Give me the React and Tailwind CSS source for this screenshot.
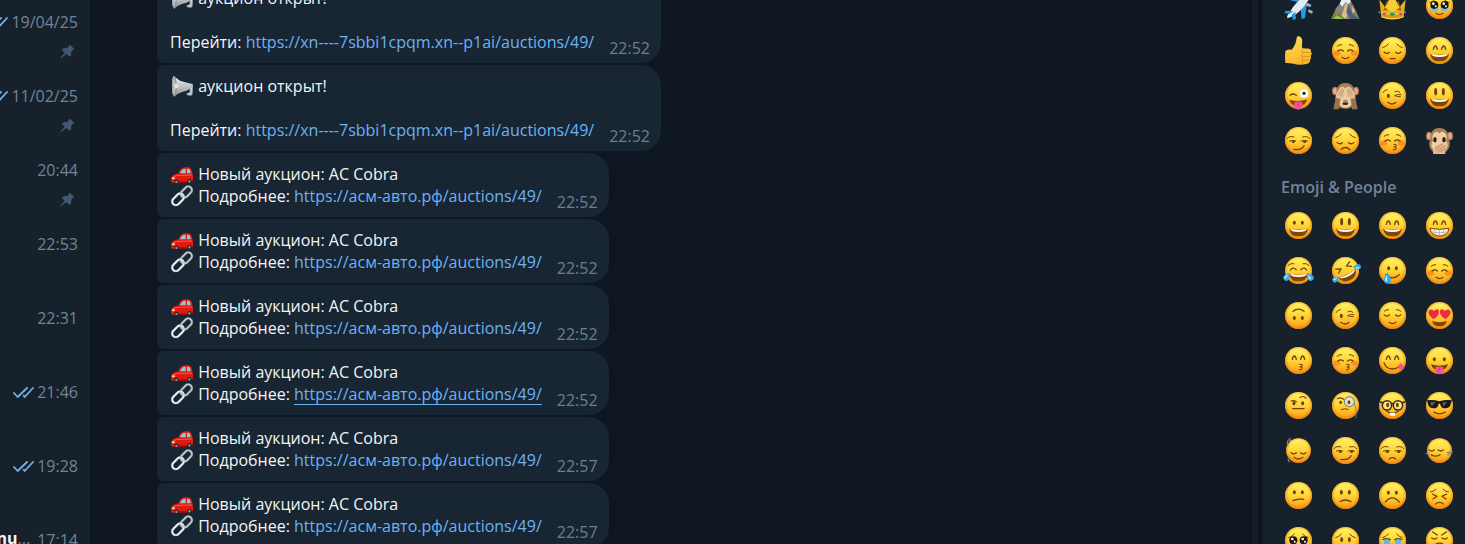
import React from "react";

const INK = "#6f4109";

/* ---------- face building blocks (81 x 81 canvas) ---------- */

const Stroke = ({ d, w = 3.8, c = INK }) => (
  <path d={d} fill="none" stroke={c} strokeWidth={w} strokeLinecap="round" strokeLinejoin="round" />
);

const OvalEyes = ({ y = 32, rx = 4.4, ry = 6, l = 28, r = 52 }) => (
  <g fill={INK}>
    <ellipse cx={l} cy={y} rx={rx} ry={ry} />
    <ellipse cx={r} cy={y} rx={rx} ry={ry} />
  </g>
);

const HappyEyes = () => <Stroke d="M22 37Q24 27 28 27Q32 27 34 37M47 37Q49 27 53 27Q57 27 59 37" w={4} />;
const ClosedUp = () => <Stroke d="M18 42Q26 35 34 42M47 42Q55 35 63 42" />;
const ClosedDown = ({ y = 0 }) => (
  <g transform={`translate(0 ${y})`}>
    <Stroke d="M15 38Q23 46 31 39M50 39Q58 46 66 38" />
  </g>
);
const SoftBrows = () => <Stroke d="M15 28Q20 22 29 23M52 23Q61 22 66 28" w={3} />;
const SadBrows = () => <Stroke d="M11 32Q21 30 28 21M53 21Q60 30 70 32" w={3} />;
const Blush = () => (
  <g fill="#ff5a1f" opacity="0.5">
    <ellipse cx="15" cy="48" rx="10" ry="8" />
    <ellipse cx="66" cy="48" rx="10" ry="8" />
  </g>
);
const Smile = ({ y = 0 }) => (
  <g transform={`translate(0 ${y})`}>
    <Stroke d="M30 61Q40 69 51 61" />
  </g>
);
const Frown = () => <Stroke d="M31 66Q40 58 50 66" />;
const Kiss = () => <Stroke d="M44 52Q54 52 51 57Q49 60 45 60Q53 60 51 65Q49 69 43 68" w={3.2} />;
const Grin = () => (
  <g>
    <path d="M12 50Q40 57 69 50Q65 73 40 73Q16 73 12 50Z" fill="#7c4706" />
    <path d="M15 51Q40 58 66 51Q64 60 40 60Q18 60 15 51Z" fill="#fff" />
  </g>
);
const SideEyes = () => (
  <g>
    <Stroke d="M6 35Q13 25 27 30M53 30Q67 25 74 35" w={3} />
    <Stroke d="M13 42Q22 38 32 42M48 42Q58 38 68 42" w={3} />
    <ellipse cx="25" cy="44" rx="5" ry="4" fill={INK} />
    <ellipse cx="59" cy="44" rx="5" ry="4" fill={INK} />
  </g>
);
const Wink = () => (
  <g>
    <Stroke d="M12 32Q15 24 25 23M48 29Q56 24 63 31" w={3} />
    <ellipse cx="28" cy="42" rx="4.4" ry="6.5" fill={INK} />
    <Stroke d="M66 38Q54 36 47 41Q56 45 64 44" w={3} />
    <Stroke d="M26 61Q39 71 51 61" />
  </g>
);
const Drop = ({ x, y, r = 0, s = 1 }) => (
  <g transform={`translate(${x} ${y}) rotate(${r}) scale(${s})`}>
    <path d="M0-15Q10-1 10 6A10 10 0 0 1-10 6Q-10-1 0-15Z" fill="#35a9ea" />
    <path d="M-1-8Q-7 1-6 7Q-4 12 0 9Z" fill="#b9ecff" />
  </g>
);
const BigEye = ({ x, y = 40 }) => (
  <g>
    <circle cx={x} cy={y} r="12" fill="#1d130d" />
    <circle cx={x - 3} cy={y - 4} r="4" fill="#fff" />
    <circle cx={x + 4} cy={y + 4} r="3" fill="#fff" />
  </g>
);
const MonkeyHead = () => (
  <g>
    <ellipse cx="9" cy="27" rx="9" ry="13" fill="#a67c55" />
    <ellipse cx="72" cy="27" rx="9" ry="13" fill="#a67c55" />
    <ellipse cx="9" cy="27" rx="5.5" ry="9" fill="#eba99c" />
    <ellipse cx="72" cy="27" rx="5.5" ry="9" fill="#eba99c" />
    <path d="M40 3C59 3 69 17 68 36C75 48 71 70 56 77Q40 83 25 77C10 70 6 48 13 36C12 17 22 3 40 3Z" fill="#a98159" />
    <path d="M40 20Q47 9 57 18Q65 28 60 41Q69 53 61 65Q53 77 40 77Q28 77 20 65Q12 53 21 41Q16 28 24 18Q34 9 40 20Z" fill="#edcfa4" />
  </g>
);

const faces = {
  holdingTears: (
    <g>
      <SadBrows />
      <BigEye x={25} y={39} />
      <BigEye x={56} y={39} />
      <path d="M12 47Q25 55 38 46Q37 59 26 59Q16 59 12 47ZM43 46Q55 55 69 47Q65 59 55 59Q45 59 43 46Z" fill="#67c9f1" />
      <Stroke d="M30 64Q40 72 51 64" />
    </g>
  ),
  relaxed: <g><Blush /><SoftBrows /><ClosedUp /><Smile /></g>,
  pensive: <g><SadBrows /><ClosedDown y={7} /><Stroke d="M33 65H48" /></g>,
  smile: <g><HappyEyes /><Grin /></g>,
  winkTongue: (
    <g>
      <Stroke d="M15 40Q25 32 34 40" />
      <circle cx="57" cy="34" r="14" fill="#fff" stroke="#d9b985" strokeWidth="1.5" />
      <circle cx="57" cy="34" r="5" fill="#3c2412" />
      <path d="M13 53Q40 62 67 52Q62 72 40 72Q18 72 13 53Z" fill="#7c4706" />
      <path d="M28 61Q40 56 52 61V73Q51 83 40 83Q29 83 28 73Z" fill="#f4529b" />
      <Stroke d="M40 62V72" w={2} c="#c62b70" />
    </g>
  ),
  wink: <Wink />,
  smiley: <g><OvalEyes y={29} rx={4.4} ry={11} l={29} /><Grin /></g>,
  smirk: <g><SideEyes /><Stroke d="M27 67Q51 70 57 56" /></g>,
  disappointed: <g><SadBrows /><ClosedDown y={8} /><Stroke d="M27 68Q40 55 54 68" /></g>,
  kissBlush: <g><Blush /><SoftBrows /><ClosedUp /><Kiss /></g>,
  grinning: <g><OvalEyes /><Grin /></g>,
  beaming: (
    <g>
      <HappyEyes />
      <path d="M12 49Q40 55 69 49Q65 72 40 72Q16 72 12 49Z" fill="#f6f3ee" stroke="#7c4706" strokeWidth="3" />
      <Stroke d="M15 60Q40 65 66 60M26 53L29 69M40 54V71M54 53L51 69" w={2} c="#a79c90" />
    </g>
  ),
  joy: (
    <g>
      <Stroke d="M10 25Q17 17 27 20M54 20Q64 17 71 25" w={3} />
      <Stroke d="M16 40Q22 28 34 38M47 38Q59 28 65 40" w={3.6} />
      <Grin />
      <Drop x={7} y={58} r={35} s={0.9} />
      <Drop x={74} y={58} r={-35} s={0.9} />
    </g>
  ),
  rofl: (
    <g>
      <g transform="rotate(-28 40 40)">
        <Stroke d="M16 23L31 30L18 38M64 23L49 30L62 38" />
        <Grin />
      </g>
      <Drop x={13} y={66} r={58} s={0.8} />
      <Drop x={74} y={30} r={-92} s={0.8} />
    </g>
  ),
  smilingTear: (
    <g><OvalEyes y={34} l={29} /><Stroke d="M20 53Q40 72 61 53" /><Drop x={25} y={62} s={1.1} /></g>
  ),
  upsideDown: <g><Stroke d="M24 28Q40 15 57 28" /><OvalEyes y={48} /></g>,
  relieved: <g><SoftBrows /><ClosedDown /><Smile /></g>,
  heartEyes: (
    <g>
      <g fill="#ee2b3f">
        <path d="M23 52Q4 39 8 28Q14 18 24 27Q33 17 39 26Q42 38 23 52Z" />
        <path d="M58 52Q77 39 73 28Q67 18 57 27Q48 17 42 26Q39 38 58 52Z" />
      </g>
      <path d="M18 57Q40 64 63 57Q59 73 40 73Q22 73 18 57Z" fill="#7c4706" />
    </g>
  ),
  kissHappy: <g><HappyEyes /><Kiss /></g>,
  yum: (
    <g>
      <HappyEyes />
      <Stroke d="M15 47Q21 66 40 66Q58 66 65 51" />
      <path d="M58 58Q62 47 71 53Q78 60 73 66Q64 72 58 62Z" fill="#f4529b" />
    </g>
  ),
  tongue: (
    <g>
      <OvalEyes y={37} l={25} r={55} />
      <path d="M15 52Q40 60 66 52Q61 70 40 70Q20 70 15 52Z" fill="#7c4706" />
      <path d="M28 61Q40 56 52 61V72Q51 82 40 82Q29 82 28 72Z" fill="#f4529b" />
      <Stroke d="M40 62V72" w={2} c="#c62b70" />
    </g>
  ),
  raisedBrow: (
    <g><Stroke d="M18 27Q26 24 34 29M45 17Q54 9 63 19" w={3.4} /><OvalEyes y={34} l={27} r={53} /><Stroke d="M23 50H57" /></g>
  ),
  monocle: (
    <g>
      <Stroke d="M16 20Q28 14 36 23" w={3.4} />
      <ellipse cx="26" cy="31" rx="4.4" ry="5" fill={INK} />
      <circle cx="52" cy="29" r="15" fill="#e6e2cf" stroke="#85868a" strokeWidth="3.5" />
      <ellipse cx="51" cy="31" rx="4" ry="6" fill={INK} />
      <Stroke d="M67 33Q75 50 72 78" w={2.5} c="#777b80" />
      <Stroke d="M28 53Q38 47 48 52" w={3} />
    </g>
  ),
  nerd: (
    <g>
      <circle cx="24" cy="40" r="14" fill="#ffe27a" stroke="#2a2b31" strokeWidth="4.5" />
      <circle cx="57" cy="40" r="14" fill="#ffe27a" stroke="#2a2b31" strokeWidth="4.5" />
      <Stroke d="M3 30L12 32M38 36Q41 33 43 36M69 32L78 30" w={4.5} c="#2a2b31" />
      <OvalEyes y={39} l={26} r={55} ry={7} />
      <Stroke d="M23 58Q40 69 58 58" />
      <path d="M33 62H48V71H34Z" fill="#fff" />
    </g>
  ),
  cool: (
    <g>
      <path d="M3 25Q20 22 40 28Q61 22 78 25L74 36Q72 49 57 49Q45 49 42 35H38Q36 49 23 49Q9 49 6 36Z" fill="#17191d" />
      <path d="M13 30H28L18 43Q13 40 13 30ZM50 31H63L53 43Q49 39 50 31Z" fill="#585d65" />
      <Stroke d="M23 60Q40 71 58 60" />
    </g>
  ),
  nod: (
    <g>
      <Stroke d="M18 47Q26 54 34 47M47 47Q55 54 63 47" />
      <Stroke d="M27 61Q40 71 54 61" />
      <Stroke d="M10 8Q5 20 9 24M15 4V12M9 66L13 75" w={3.5} c="#8a8783" />
    </g>
  ),
  unamused: <g><SideEyes /><Frown /></g>,
  shake: (
    <g>
      <Stroke d="M9 39Q17 45 25 39M36 39Q44 45 52 39" />
      <Stroke d="M16 53Q28 62 42 53" />
      <Stroke d="M0 49L9 53M64 47L79 44M66 53L76 46" w={3.5} c="#8a8783" />
    </g>
  ),
  confused: <g><OvalEyes y={31} /><Stroke d="M24 56Q36 49 56 52" /></g>,
  slightFrown: <g><OvalEyes y={31} ry={7} /><Stroke d="M24 59Q40 49 57 59" /></g>,
  frowning: <g><OvalEyes y={32} /><Stroke d="M19 60Q40 35 61 60" /></g>,
  persevere: (
    <g>
      <Stroke d="M13 30Q22 30 30 22M51 22Q59 30 68 30" w={3} />
      <Stroke d="M19 36L33 43L21 51M62 36L48 43L60 51" />
      <Stroke d="M29 66Q40 56 52 66" />
    </g>
  ),
  pleading: <g><SadBrows /><BigEye x={25} /><BigEye x={56} /><Frown /></g>,
  cry: <g><SadBrows /><OvalEyes y={38} l={29} ry={7} /><Stroke d="M29 61Q40 53 52 61" /><Drop x={23} y={64} /></g>,
  sob: (
    <g>
      <SadBrows />
      <path d="M15 38H33V74Q23 80 13 70ZM48 38H66L68 70Q58 80 48 74Z" fill="#5bb9ea" />
      <Stroke d="M12 38Q23 32 34 38M47 38Q58 32 69 38" />
      <ellipse cx="40" cy="60" rx="9" ry="10" fill="#7c4706" />
    </g>
  ),
  huff: (
    <g>
      <Stroke d="M20 15L34 24M61 15L47 24" w={4} />
      <Stroke d="M17 33Q25 39 33 33M48 33Q56 39 64 33" />
      <Stroke d="M27 53Q40 44 54 53" />
      <path d="M31 57Q18 54 10 64Q18 76 31 68ZM50 57Q63 54 71 64Q63 76 50 68Z" fill="#e9eef2" />
    </g>
  ),
};

const pictures = {
  airplane: (
    <g>
      <path d="M37 30L-1 20L4 12L49 14ZM46 44L50 82L60 78L66 32Z" fill="#279ae4" />
      <path d="M72 0Q84-1 79 12L63 35Q46 59 24 72L8 79Q4 74 10 67Q23 43 45 21Q59 5 72 0Z" fill="#e4eaf0" />
      <path d="M14 66L-1 63L1 56L25 57ZM20 69L24 84L33 81L31 59Z" fill="#1f98e5" />
      <path d="M67 32L79 38L77 45L63 42ZM71 52L84 58L81 65L69 60Z" fill="#9fb1c0" />
      <path d="M67 11L76 8L73 18Z" fill="#405d75" />
    </g>
  ),
  mountain: (
    <g>
      <path d="M-2 81L12 48L23 35L34 10L44 3L57 29L65 42L83 81Z" fill="#8b8177" />
      <path d="M34 10L44 3L57 29L48 37L41 29L31 44L23 35Z" fill="#e6edf3" />
      <path d="M40 31L50 43L43 80H25L35 53ZM60 43L69 57L61 65Z" fill="#d8bd91" />
      <path d="M48 37L63 67L83 81H55L43 61Z" fill="#4e6378" />
      <path d="M-2 81L7 61L16 69L21 58L29 72L41 81Z" fill="#668a35" />
      <path d="M13 70L24 75L34 81H5Z" fill="#a9bd52" />
    </g>
  ),
  crown: (
    <g>
      <path d="M1 22L18 45L40 5L62 45L80 22L74 75Q40 90 7 75Z" fill="#e8b21c" />
      <path d="M13 56L24 24L32 53ZM49 53L57 24L68 56Z" fill="#9a6710" />
      <path d="M18 47L40 10L62 47L40 61Z" fill="#f5cc3a" />
      <path d="M5 57Q40 70 76 57L74 74Q40 88 7 74Z" fill="#d99a13" />
      <Stroke d="M7 61Q40 73 74 61M8 75Q40 86 73 75" c="#ffe36b" w={2.5} />
      <ellipse cx="40" cy="67" rx="7" ry="5.5" fill="#14a274" />
      <circle cx="16" cy="66" r="4.5" fill="#df3f8c" />
      <circle cx="65" cy="66" r="4.5" fill="#df3f8c" />
      <circle cx="1" cy="61" r="3" fill="#22a878" />
      <circle cx="79" cy="61" r="3" fill="#8f53c2" />
    </g>
  ),
  thumbsUp: (
    <g>
      <path d="M1 42Q8 37 20 38Q33 24 35 2Q36-3 42-2Q55 2 51 23Q50 31 52 34L73 35Q80 38 78 45Q83 50 77 57Q81 64 75 69Q76 80 64 81Q40 86 26 80Q10 77 1 78Q-1 60 1 42Z" fill="url(#thumb)" />
      <Stroke d="M54 46Q64 48 77 46M53 58Q63 60 76 58M54 70Q62 72 73 69M53 37Q47 43 54 47Q47 52 53 58Q47 63 54 70Q48 75 54 80" c="#cc8a14" w={2} />
    </g>
  ),
  seeNoEvil: (
    <g>
      <MonkeyHead />
      <path d="M36 53L32 59H49L45 53Z" fill="#a98159" />
      <ellipse cx="40" cy="65" rx="9" ry="4" fill="#4c2119" />
      <path d="M4 82Q7 59 15 43L27 43Q23 60 21 82ZM77 82Q74 59 66 43L54 43Q58 60 60 82Z" fill="#9a734e" />
      <path d="M13 49Q9 34 20 24L32 15Q38 17 38 24L38 40Q35 49 24 50ZM68 49Q72 34 61 24L49 15Q43 17 43 24L43 40Q46 49 57 50Z" fill="#e5bf97" />
      <Stroke d="M21 39L30 21M27 42L35 24M60 39L51 21M54 42L46 24" c="#a57b57" w={1.8} />
    </g>
  ),
  speakNoEvil: (
    <g>
      <MonkeyHead />
      <ellipse cx="27" cy="38" rx="5" ry="8" fill="#2a1a12" />
      <ellipse cx="54" cy="38" rx="5" ry="8" fill="#2a1a12" />
      <path d="M22 81Q18 66 31 55L51 47Q57 48 54 54L61 53Q66 55 60 61Q64 66 57 71L58 81Z" fill="#e5b993" />
      <Stroke d="M29 65L50 51M33 71L57 58M39 75L57 66" c="#a57456" w={2} />
    </g>
  ),
};

const smaller = ["nod", "shake"];

const Emoji = ({ name }) => (
  <svg viewBox="0 0 81 81" className="size-[27px] overflow-visible" aria-hidden="true">
    {pictures[name] || (
      <g>
        <circle cx="40.5" cy="40.5" r={smaller.includes(name) ? 37 : 40.5} fill="url(#faceFill)" />
        <circle cx="40.5" cy="40.5" r={smaller.includes(name) ? 37 : 40.5} fill="url(#faceRim)" />
        {faces[name]}
      </g>
    )}
  </svg>
);

const Gradients = () => (
  <svg className="absolute size-0" aria-hidden="true">
    <defs>
      <linearGradient id="faceFill" x1="0" y1="0" x2="0" y2="1">
        <stop offset="0" stopColor="#fff36a" />
        <stop offset="0.45" stopColor="#ffd93a" />
        <stop offset="1" stopColor="#fc9c18" />
      </linearGradient>
      <radialGradient id="faceRim" cx="0.5" cy="0.47" r="0.53">
        <stop offset="0.72" stopColor="#f08c12" stopOpacity="0" />
        <stop offset="1" stopColor="#e67c0c" stopOpacity="0.85" />
      </radialGradient>
      <linearGradient id="thumb" x1="0" y1="0" x2="0.3" y2="1">
        <stop offset="0" stopColor="#ffdf55" />
        <stop offset="1" stopColor="#f8b62b" />
      </linearGradient>
      <linearGradient id="horn" x1="0" y1="0" x2="0" y2="1">
        <stop offset="0" stopColor="#f2f2f2" />
        <stop offset="1" stopColor="#8f9294" />
      </linearGradient>
    </defs>
  </svg>
);

/* ---------- inline message emoji (72 x 66 canvas) ---------- */

const glyphs = {
  megaphone: (
    <g>
      <path d="M48 26H67Q70 27 69 32L68 56Q67 62 62 62L52 61Q49 59 50 54L58 53L60 34L48 34Z" fill="#93adbd" />
      <path d="M60 32L65 31L63 57L54 57" fill="none" stroke="#dce8ef" strokeWidth="2.5" />
      <path d="M11 3Q18 9 30 17L65 27Q68 31 67 38L48 48Q27 51 13 65Q6 64 6 34Q6 5 11 3Z" fill="url(#horn)" />
      <ellipse cx="13" cy="34" rx="7" ry="30" fill="#8c9092" />
      <ellipse cx="12" cy="34" rx="4.5" ry="26" fill="#b9bcbd" />
      <path d="M14 25L25 30L26 37L14 42Z" fill="#e2e4e5" />
    </g>
  ),
  car: (
    <g>
      <path d="M4 43Q7 34 25 31Q31 14 43 13H56Q66 14 67 31Q71 38 69 50Q68 58 57 58L12 60Q2 59 3 50Z" fill="#e3180e" />
      <path d="M30 31Q35 18 44 17.500H47L47 31ZM51 17.500H56Q62 19 62 31H51Z" fill="#86cdda" />
      <path d="M8 42Q20 36 31 37L66 36" fill="none" stroke="#ff5a4d" strokeWidth="3" />
      <ellipse cx="10" cy="46" rx="5" ry="3" fill="#ffdf9a" />
      <path d="M27 57H49" stroke="#8d0d08" strokeWidth="4" />
      <circle cx="19" cy="57" r="7" fill="#29272a" />
      <circle cx="58" cy="55" r="7" fill="#29272a" />
      <circle cx="19" cy="57" r="3.200" fill="#a6a6aa" />
      <circle cx="58" cy="55" r="3.200" fill="#a6a6aa" />
    </g>
  ),
  link: (
    <g fill="none" strokeLinecap="round">
      <rect x="-19" y="-11" width="38" height="22" rx="11" transform="translate(49 21) rotate(-45)" stroke="#858c93" strokeWidth="7.500" />
      <rect x="-19" y="-11" width="38" height="22" rx="11" transform="translate(49 21) rotate(-45)" stroke="#cdd3d8" strokeWidth="3.500" />
      <rect x="-20" y="-11" width="40" height="22" rx="11" transform="translate(24 43) rotate(-45)" stroke="#9aa1a8" strokeWidth="7.500" />
      <rect x="-20" y="-11" width="40" height="22" rx="11" transform="translate(24 43) rotate(-45)" stroke="#f3f6f8" strokeWidth="4.500" />
      <path d="M32 27L43 36" stroke="#c4cbd1" strokeWidth="4.500" />
    </g>
  ),
};

const Glyph = ({ name }) => (
  <svg viewBox="0 0 72 66" className="inline-block h-[22px] w-6 align-top" aria-hidden="true">
    {glyphs[name]}
  </svg>
);

/* ---------- chat list ---------- */

const Checks = () => (
  <svg viewBox="0 0 63 33" className="h-[11px] w-[21px]" fill="none" stroke="#6ab3f3" strokeWidth="5.5" strokeLinecap="round" strokeLinejoin="round" aria-hidden="true">
    <path d="M3 18L14 30L42 3M32 26L35 30L60 3" />
  </svg>
);

const Pin = () => (
  <svg viewBox="0 0 42 42" className="size-3.5" fill="#425870" aria-hidden="true">
    <path d="M27 1Q30-1 33 2L40 9Q43 12 40 15L37 16L33 23Q35 31 31 34Q29 36 26 33L19 27L3 40L1 38L14 23L7 16Q5 13 8 11Q13 8 19 10L26 5Z" />
  </svg>
);

const chats = [
  { time: "19/04/25", read: true, pinned: true },
  { time: "11/02/25", read: true, pinned: true },
  { time: "20:44", pinned: true },
  { time: "22:53" },
  { time: "22:31" },
  { time: "21:46", read: true },
  { time: "19:28", read: true },
  { time: "17:14", name: "nu" },
];

const ChatList = () => (
  <aside className="w-[91px] shrink-0 overflow-hidden border-r border-[#0b131b] bg-[#17212b]">
    <ul>
      {chats.map((chat) => (
        <li key={chat.time} className="flex h-[74px] flex-col items-end gap-3 pt-[11px] pr-3 text-[#708499]">
          <div className="flex items-center gap-[3px] whitespace-nowrap leading-[22px]">
            {chat.read && <Checks />}
            {chat.name && (
              <span className="self-start pr-1 leading-[18px]">
                <b className="font-bold text-[#f5f5f5]">{chat.name}</b>...
              </span>
            )}
            <time>{chat.time}</time>
          </div>
          {chat.pinned && (
            <span className="pr-1">
              <Pin />
            </span>
          )}
        </li>
      ))}
    </ul>
  </aside>
);

/* ---------- conversation ---------- */

const XN = "https://xn----7sbbi1cpqm.xn--p1ai/auctions/49/";
const RF = "https://асм-авто.рф/auctions/49/";

const messages = [
  { kind: "open", time: "22:52" },
  { kind: "open", time: "22:52" },
  { kind: "new", time: "22:52" },
  { kind: "new", time: "22:52" },
  { kind: "new", time: "22:52" },
  { kind: "new", time: "22:52", hovered: true },
  { kind: "new", time: "22:57" },
  { kind: "new", time: "22:57" },
];

const Message = ({ kind, time, hovered }) => {
  const url = kind === "open" ? XN : RF;
  const link = (
    <a href={url} className={hovered ? "text-[#6ab3f3] underline underline-offset-4" : "text-[#6ab3f3] hover:underline"}>
      {url}
    </a>
  );
  return (
    <article className="flex w-fit items-end gap-[15px] rounded-l-md rounded-r-[20px] bg-[#182533] py-2.5 pr-[11px] pl-[13px] leading-[22px] whitespace-nowrap text-[#f5f5f5]">
      {kind === "open" ? (
        <div>
          <p><Glyph name="megaphone" /> аукцион открыт!</p>
          <br />
          <p>Перейти: {link}</p>
        </div>
      ) : (
        <div>
          <p><Glyph name="car" /> Новый аукцион: AC Cobra</p>
          <p><Glyph name="link" /> Подробнее: {link}</p>
        </div>
      )}
      <time className="-mb-1.5 text-[#6d7f8f]">{time}</time>
    </article>
  );
};

/* ---------- emoji panel ---------- */

const recent = [
  "airplane", "mountain", "crown", "holdingTears",
  "thumbsUp", "relaxed", "pensive", "smile",
  "winkTongue", "seeNoEvil", "wink", "smiley",
  "smirk", "disappointed", "kissBlush", "speakNoEvil",
];

const people = [
  "grinning", "smiley", "smile", "beaming",
  "joy", "rofl", "smilingTear", "relaxed",
  "upsideDown", "wink", "relieved", "heartEyes",
  "kissHappy", "kissBlush", "yum", "tongue",
  "raisedBrow", "monocle", "nerd", "cool",
  "nod", "smirk", "unamused", "shake",
  "confused", "slightFrown", "frowning", "persevere",
  "pleading", "cry", "sob", "huff",
];

const EmojiGrid = ({ names }) => (
  <div className="grid grid-cols-[repeat(4,47px)]">
    {names.map((name) => (
      <button key={name} type="button" aria-label={name} className="flex h-[45px] items-center justify-center">
        <Emoji name={name} />
      </button>
    ))}
  </div>
);

export default function App() {
  return (
    <div className="flex h-screen overflow-hidden bg-[#0e1621] font-['Open_Sans','Noto_Sans',sans-serif] text-base">
      <Gradients />
      <ChatList />
      <main className="min-w-0 flex-1 overflow-hidden">
        <div className="-mt-[23px] flex flex-col gap-0.5 pl-[66px]">
          {messages.map((message, i) => (
            <Message key={i} {...message} />
          ))}
        </div>
      </main>
      <div className="mr-[3px] w-1.5 shrink-0 bg-[#151d28]" />
      <section className="w-[204px] shrink-0 overflow-hidden border-l border-[#0b131b] bg-[#17212b]">
        <div className="-mt-[17px] pl-[13px]">
          <EmojiGrid names={recent} />
          <h2 className="flex h-10 items-center pt-2 pl-1.5 font-semibold text-[#708499]">Emoji &amp; People</h2>
          <EmojiGrid names={people} />
        </div>
      </section>
    </div>
  );
}
